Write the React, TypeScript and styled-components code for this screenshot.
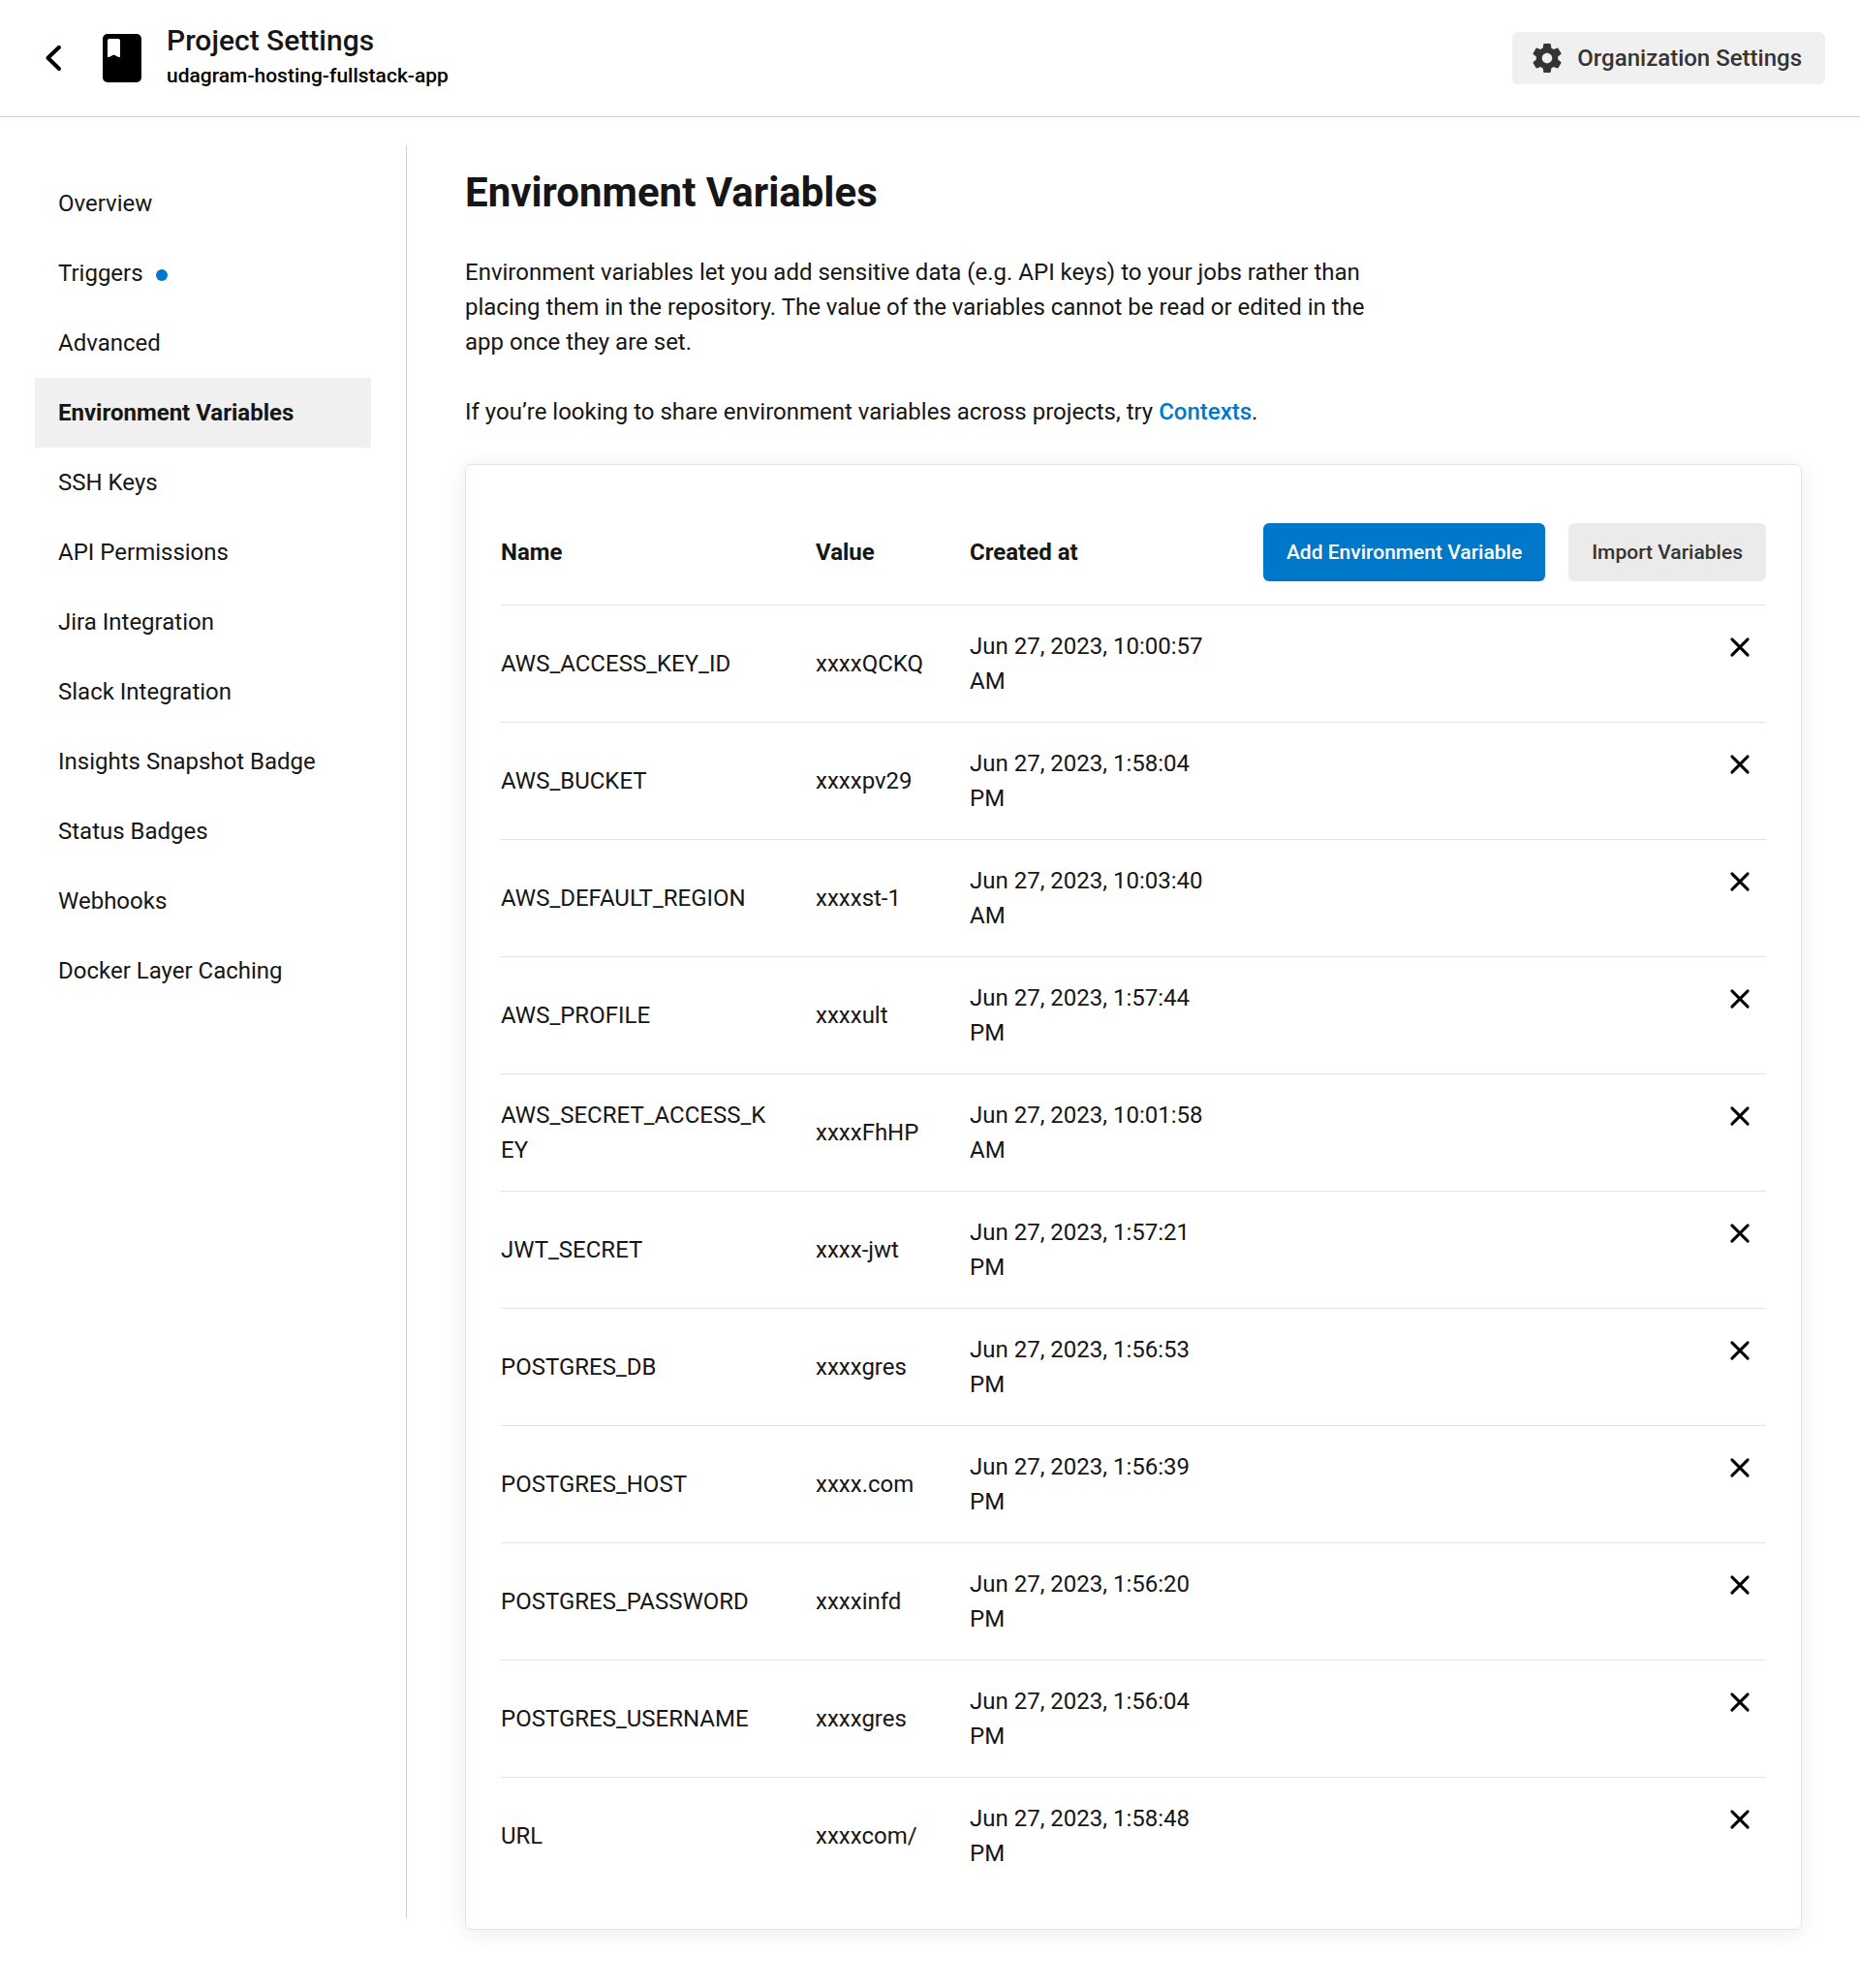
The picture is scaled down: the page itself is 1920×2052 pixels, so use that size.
import React from "react";
import styled, { createGlobalStyle } from "styled-components";

const GlobalStyle = createGlobalStyle`
  *, *::before, *::after { box-sizing: border-box; }
  body {
    margin: 0;
    background: #fff;
    color: #161616;
    font-family: Roboto, "Liberation Sans", sans-serif;
    font-size: 24px;
    line-height: 36px;
  }
`;

const Page = styled.div`
  min-height: 2052px;
`;

const Header = styled.header`
  display: flex;
  align-items: center;
  height: 121px;
  padding: 0 36px 0 37px;
  border-bottom: 1px solid #d0d0d0;
`;

const BackLink = styled.a`
  display: flex;
  margin-right: 33px;
`;

const Crumb = styled.div`
  display: flex;
  align-items: center;
  flex: 1;
  gap: 26px;
`;

const CrumbText = styled.div`
  display: flex;
  flex-direction: column;
`;

const CrumbTitle = styled.span`
  font-size: 30px;
  font-weight: 500;
  line-height: 36px;
`;

const CrumbProject = styled.span`
  color: #000;
  font-size: 21px;
  font-weight: 500;
  line-height: 36px;
`;

const OrgButton = styled.button`
  display: flex;
  align-items: center;
  gap: 13px;
  height: 54px;
  padding: 0 24px 0 18px;
  border: 0;
  border-radius: 6px;
  background: #f0f0f0;
  color: #343434;
  font: 500 24px/36px Roboto, "Liberation Sans", sans-serif;
`;

const Body = styled.div`
  display: flex;
  align-items: flex-start;
  padding-top: 29px;
`;

const Sidebar = styled.nav`
  display: flex;
  flex-direction: column;
  width: 420px;
  height: 1830px;
  padding: 24px 36px;
  border-right: 1px solid #d0d0d0;
`;

const NavItem = styled.a<{ $active?: boolean }>`
  display: flex;
  align-items: center;
  gap: 13px;
  height: 72px;
  padding: 0 24px;
  background: ${(p) => (p.$active ? "#f0f0f0" : "transparent")};
  font-weight: ${(p) => (p.$active ? 700 : 400)};
`;

const Dot = styled.span`
  width: 12px;
  height: 12px;
  margin-top: 4px;
  border-radius: 50%;
  background: #0078ca;
`;

const Main = styled.main`
  width: 1380px;
  margin: 25px 0 0 60px;
`;

const Heading = styled.h1`
  margin: 0 0 40px;
  font-size: 42px;
  font-weight: 700;
  line-height: 48px;
`;

const Paragraph = styled.p`
  max-width: 940px;
  margin: 0 0 36px;
`;

const Link = styled.a`
  color: #0078ca;
  font-weight: 500;
`;

const Card = styled.section`
  height: 1513px;
  padding: 60px 36px 0;
  border: 1px solid #e3e3e3;
  border-radius: 6px;
  box-shadow: 0 3px 24px rgba(0, 0, 0, 0.08);
`;

const TableHead = styled.div`
  display: grid;
  grid-template-columns: 325px 159px 1fr auto;
  align-items: center;
  height: 84px;
  padding-bottom: 24px;
  font-weight: 700;
`;

const Actions = styled.div`
  display: flex;
  gap: 24px;
`;

const Button = styled.button<{ $primary?: boolean }>`
  height: 60px;
  padding: 0 24px;
  border: 0;
  border-radius: 6px;
  background: ${(p) => (p.$primary ? "#0078ca" : "#ebebeb")};
  color: ${(p) => (p.$primary ? "#fff" : "#343434")};
  font: 500 21px/24px Roboto, "Liberation Sans", sans-serif;
`;

const Row = styled.div`
  display: grid;
  grid-template-columns: 277px 111px 250px 1fr;
  column-gap: 48px;
  align-items: center;
  height: 121px;
  padding: 24px 0;
  border-top: 1px solid #e3e3e3;
`;

const Cell = styled.span`
  word-break: break-all;
`;

const DateCell = styled.span`
  width: 250px;
`;

const RemoveButton = styled.button`
  display: flex;
  align-self: start;
  justify-self: end;
  margin: 1px 9px 0 0;
  padding: 0;
  border: 0;
  background: none;
`;

const NAV = [
  "Overview",
  "Triggers",
  "Advanced",
  "Environment Variables",
  "SSH Keys",
  "API Permissions",
  "Jira Integration",
  "Slack Integration",
  "Insights Snapshot Badge",
  "Status Badges",
  "Webhooks",
  "Docker Layer Caching",
];

const VARIABLES = [
  ["AWS_ACCESS_KEY_ID", "xxxxQCKQ", "Jun 27, 2023, 10:00:57 AM"],
  ["AWS_BUCKET", "xxxxpv29", "Jun 27, 2023, 1:58:04 PM"],
  ["AWS_DEFAULT_REGION", "xxxxst-1", "Jun 27, 2023, 10:03:40 AM"],
  ["AWS_PROFILE", "xxxxult", "Jun 27, 2023, 1:57:44 PM"],
  ["AWS_SECRET_ACCESS_KEY", "xxxxFhHP", "Jun 27, 2023, 10:01:58 AM"],
  ["JWT_SECRET", "xxxx-jwt", "Jun 27, 2023, 1:57:21 PM"],
  ["POSTGRES_DB", "xxxxgres", "Jun 27, 2023, 1:56:53 PM"],
  ["POSTGRES_HOST", "xxxx.com", "Jun 27, 2023, 1:56:39 PM"],
  ["POSTGRES_PASSWORD", "xxxxinfd", "Jun 27, 2023, 1:56:20 PM"],
  ["POSTGRES_USERNAME", "xxxxgres", "Jun 27, 2023, 1:56:04 PM"],
  ["URL", "xxxxcom/", "Jun 27, 2023, 1:58:48 PM"],
];

const ChevronIcon = () => (
  <svg width="36" height="36" viewBox="0 0 36 36" fill="none">
    <path d="M24 7 12.5 18 24 29.2" transform="translate(0 -.2)" stroke="#000" strokeWidth="4" strokeLinecap="round" strokeLinejoin="round" />
  </svg>
);

const BookIcon = () => (
  <svg width="40" height="50" viewBox="0 0 40 50">
    <rect width="40" height="50" rx="5" fill="#000" />
    <path d="M7 5h9a2 2 0 0 1 2 2v17h-1.5L11.5 21.5 6.500 24H5V7a2 2 0 0 1 2-2z" fill="#fff" />
  </svg>
);

const GearIcon = () => (
  <svg width="36" height="36" viewBox="0 0 24 24" fill="currentColor">
    <path d="M19.43 12.98c.04-.32.07-.64.07-.98s-.03-.66-.07-.98l2.11-1.65c.19-.15.24-.42.12-.64l-2-3.46c-.12-.22-.39-.3-.61-.22l-2.49 1c-.52-.4-1.08-.73-1.69-.98l-.38-2.65C14.46 2.18 14.25 2 14 2h-4c-.25 0-.46.18-.49.42l-.38 2.65c-.61.25-1.17.59-1.69.98l-2.49-1c-.23-.09-.49 0-.61.22l-2 3.46c-.13.22-.07.49.12.64l2.11 1.65c-.04.32-.07.65-.07.98s.03.66.07.98l-2.11 1.65c-.19.15-.24.42-.12.64l2 3.46c.12.22.39.3.61.22l2.49-1c.52.4 1.08.73 1.69.98l.38 2.65c.03.24.24.42.49.42h4c.25 0 .46-.18.49-.42l.38-2.65c.61-.25 1.17-.59 1.69-.98l2.49 1c.23.09.49 0 .61-.22l2-3.46c.12-.22.07-.49-.12-.64l-2.11-1.65zM12 15.5c-1.93 0-3.5-1.57-3.5-3.5s1.57-3.5 3.5-3.5 3.5 1.57 3.5 3.5-1.57 3.5-3.5 3.5z" />
  </svg>
);

const CrossIcon = () => (
  <svg width="36" height="36" viewBox="0 0 36 36" fill="none">
    <path d="M9.900 9.900 26.100 26.100M26.100 9.900 9.900 26.100" stroke="#000" strokeWidth="3" strokeLinecap="round" />
  </svg>
);

export default function App() {
  return (
    <Page>
      <GlobalStyle />
      <Header>
        <BackLink aria-label="Back">
          <ChevronIcon />
        </BackLink>
        <Crumb>
          <BookIcon />
          <CrumbText>
            <CrumbTitle>Project Settings</CrumbTitle>
            <CrumbProject>udagram-hosting-fullstack-app</CrumbProject>
          </CrumbText>
        </Crumb>
        <OrgButton>
          <GearIcon />
          Organization Settings
        </OrgButton>
      </Header>
      <Body>
        <Sidebar>
          {NAV.map((label) => (
            <NavItem key={label} $active={label === "Environment Variables"}>
              {label}
              {label === "Triggers" && <Dot />}
            </NavItem>
          ))}
        </Sidebar>
        <Main>
          <Heading>Environment Variables</Heading>
          <Paragraph>
            Environment variables let you add sensitive data (e.g. API keys) to your jobs rather than placing them in
            the repository. The value of the variables cannot be read or edited in the app once they are set.
          </Paragraph>
          <Paragraph>
            If you’re looking to share environment variables across projects, try <Link>Contexts</Link>.
          </Paragraph>
          <Card>
            <TableHead>
              <span>Name</span>
              <span>Value</span>
              <span>Created at</span>
              <Actions>
                <Button $primary>Add Environment Variable</Button>
                <Button>Import Variables</Button>
              </Actions>
            </TableHead>
            {VARIABLES.map(([name, value, created]) => (
              <Row key={name}>
                <Cell>{name}</Cell>
                <Cell>{value}</Cell>
                <DateCell>{created}</DateCell>
                <RemoveButton aria-label={`Remove ${name}`}>
                  <CrossIcon />
                </RemoveButton>
              </Row>
            ))}
          </Card>
        </Main>
      </Body>
    </Page>
  );
}
